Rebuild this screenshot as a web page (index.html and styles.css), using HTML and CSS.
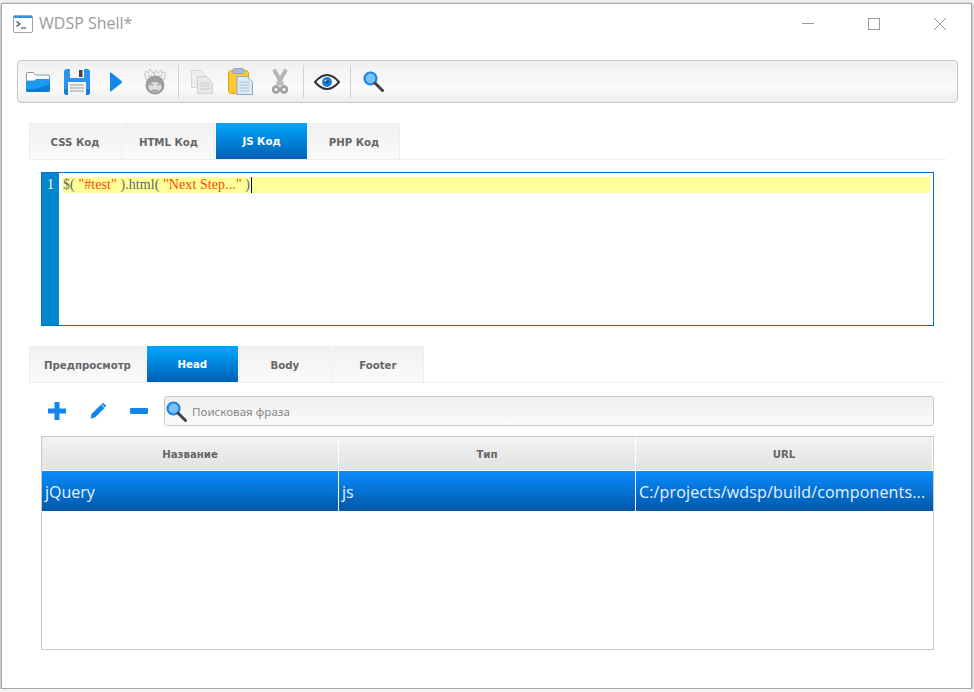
FILE: index.html
```html
<!DOCTYPE html>
<html lang="en">
<head>
    <meta charset="UTF-8">
    <meta name="viewport" content="width=device-width, initial-scale=1.0">
    <title>WDSP Shell</title>
    <link rel="stylesheet" href="styles.css">
</head>
<body>
    <div class="window">
        <!-- Title bar -->
        <div class="titlebar">
            <svg class="app-icon" width="20" height="18" viewBox="0 0 20 18">
                <rect x="0.5" y="0.5" width="19" height="17" rx="1.5" fill="#fff" stroke="#9aa5b0"/>
                <rect x="1" y="1" width="18" height="2" fill="#3a8fd6"/>
                <path d="M3.5 6.5l3.5 2.5-3.500 2.500" fill="none" stroke="#444" stroke-width="1.100"/>
                <path d="M8 13h5" stroke="#444" stroke-width="1.100"/>
            </svg>
            <span class="app-title">WDSP Shell*</span>
            <div class="win-controls">
                <button class="win-btn">
                    <svg width="12" height="12" viewBox="0 0 12 12"><path d="M0 5.5h12" stroke="#999"/></svg>
                </button>
                <button class="win-btn">
                    <svg width="12" height="12" viewBox="0 0 12 12"><rect x="0.5" y="0.5" width="11" height="11" fill="none" stroke="#999"/></svg>
                </button>
                <button class="win-btn">
                    <svg width="12" height="12" viewBox="0 0 12 12"><path d="M0 0l12 12M12 0L0 12" stroke="#999"/></svg>
                </button>
            </div>
        </div>

        <!-- Main toolbar -->
        <div class="toolbar">
            <button class="tool-btn">
                <svg width="24" height="20" viewBox="0 0 24 20">
                    <path d="M0.5 6V1.500q0-1 1-1h6l2 2.500h13q1 0 1 1V9H0.500z" fill="#fdfdfd" stroke="#8b96a0"/>
                    <path d="M0 9h8l2-2h14v11q0 2-2 2H2q-2 0-2-2z" fill="#1a9af0"/>
                    <path d="M0 17q12 1 24-5v6q0 2-2 2H2q-2 0-2-2z" fill="#0a7cd6"/>
                </svg>
            </button>
            <button class="tool-btn">
                <svg width="26" height="26" viewBox="0 0 26 26">
                    <rect width="26" height="26" rx="3" fill="#2b94f2"/>
                    <path d="M0 20h26v3q0 3-3 3H3q-3 0-3-3z" fill="#1a7ed8"/>
                    <rect x="6" y="0" width="14" height="9" fill="#f6f6f6"/>
                    <rect x="15" y="1" width="3.500" height="7" fill="#444"/>
                    <rect x="4" y="13" width="18" height="13" fill="#f4f4f4"/>
                    <path d="M6 16h14M6 19h14M6 22h14" stroke="#999"/>
                </svg>
            </button>
            <button class="tool-btn">
                <svg width="12" height="20" viewBox="0 0 12 20">
                    <path d="M1 0.500L11.500 9q1 1 0 2L1 19.500q-1 .5-1-1V1.500q0-1.500 1-1z" fill="#1486ea"/>
                </svg>
            </button>
            <button class="tool-btn">
                <svg class="muted-icon" width="24" height="26" viewBox="0 0 24 26">
                    <path d="M3 11Q0 6 3 2l2 2 2-4 3 4 3-3 2 3 3-3 1 3 3-1q2 4-1 8z" fill="#ececec" stroke="#c4c4c4"/>
                    <path d="M5 6q2 2 4 1M19 6q-2 2-4 1M11 3l1 4" stroke="#bbb" fill="none"/>
                    <circle cx="12" cy="16" r="9.500" fill="#8f8f8f"/>
                    <ellipse cx="12" cy="18" rx="6.500" ry="5" fill="#d8d8d8"/>
                    <path d="M7 15l3 1M17 15l-3 1M9 21q3 1.500 6 0" stroke="#808080" stroke-width="1.300" fill="none"/>
                </svg>
            </button>
            <span class="tool-sep"></span>
            <button class="tool-btn">
                <svg width="22" height="24" viewBox="0 0 22 24">
                    <path d="M0.500 0.500h9l4 4v13h-13z" fill="#eee" stroke="#d8d8d8"/>
                    <path d="M6.500 6.500h9l6 6v11h-15z" fill="#e8e8e8" stroke="#d0d0d0"/>
                    <path d="M9 13h10M9 16h10M9 19h10" stroke="#c8c8c8"/>
                </svg>
            </button>
            <button class="tool-btn">
                <svg width="25" height="27" viewBox="0 0 25 27">
                    <rect x="0.500" y="2.500" width="20" height="23" rx="3" fill="#fcc934" stroke="#d79f1e"/>
                    <rect x="5" y="0.500" width="11" height="5" rx="1.500" fill="#a9bdd4" stroke="#8ea6c0"/>
                    <path d="M9 8.500h10l5.500 5.500v12.500H9z" fill="#dfe9f5" stroke="#8fa9c8"/>
                    <path d="M11.500 14h10M11.500 17h10M11.500 20h10M11.500 23h10" stroke="#a8c0dc"/>
                </svg>
            </button>
            <button class="tool-btn">
                <svg width="16" height="25" viewBox="0 0 16 25">
                    <path d="M2 0.500L10.500 16M14 0.500L5.500 16" stroke="#b6b6b6" stroke-width="4" fill="none"/>
                    <circle cx="4" cy="20.500" r="3" fill="none" stroke="#a4a4a4" stroke-width="2.800"/>
                    <circle cx="12" cy="20.500" r="3" fill="none" stroke="#a4a4a4" stroke-width="2.800"/>
                </svg>
            </button>
            <span class="tool-sep"></span>
            <button class="tool-btn">
                <svg width="26" height="16" viewBox="0 0 26 16">
                    <path d="M1 8q12-14 24 0q-12 14-24 0z" fill="#fff" stroke="#333" stroke-width="2"/>
                    <circle cx="13" cy="8" r="5" fill="#1a7fdc"/>
                    <circle cx="13" cy="8" r="2" fill="#0b4f96"/>
                    <circle cx="11.500" cy="6.500" r="1" fill="#cfe6fb"/>
                </svg>
            </button>
            <span class="tool-sep"></span>
            <button class="tool-btn">
                <svg width="21" height="21" viewBox="0 0 21 21">
                    <circle cx="7.500" cy="7.500" r="6" fill="#7cc0f7" stroke="#1a86e6" stroke-width="2.200"/>
                    <path d="M12 12l7.500 7.500" stroke="#444" stroke-width="3" stroke-linecap="round"/>
                </svg>
            </button>
        </div>

        <!-- Code tabs -->
        <div class="tabs code-tabs">
            <div class="tab">CSS Код</div>
            <div class="tab html-tab">HTML Код</div>
            <div class="tab active">JS Код</div>
            <div class="tab">PHP Код</div>
        </div>

        <!-- Editor -->
        <div class="editor">
            <div class="gutter">1</div>
            <div class="code-area">
                <div class="code-line">$( <span class="str">"#test"</span> ).html( <span class="str">"Next Step..."</span> )<span class="caret"></span></div>
            </div>
        </div>

        <!-- Resource tabs -->
        <div class="tabs res-tabs">
            <div class="tab">Предпросмотр</div>
            <div class="tab active">Head</div>
            <div class="tab">Body</div>
            <div class="tab">Footer</div>
        </div>

        <!-- Search row -->
        <div class="search-row">
            <button class="row-btn">
                <svg width="18" height="18" viewBox="0 0 18 18"><path d="M6.500 0h5v6.500H18v5h-6.500V18h-5v-6.500H0v-5h6.500z" fill="#1486ea"/></svg>
            </button>
            <button class="row-btn">
                <svg width="16" height="16" viewBox="0 0 16 16"><path d="M0.500 15.500l1-4.500L11 1.500l3.500 3.500L5 14.500zM12 .5q1-1 2 0l1.500 1.500q1 1 0 2l-.5.500L11.500 1z" fill="#1486ea"/></svg>
            </button>
            <button class="row-btn">
                <svg width="18" height="6" viewBox="0 0 18 6"><rect width="18" height="6" rx="1" fill="#1486ea"/></svg>
            </button>
            <div class="search-box">
                <svg width="21" height="21" viewBox="0 0 21 21">
                    <circle cx="7.500" cy="7.500" r="6" fill="#7cc0f7" stroke="#1a86e6" stroke-width="2.200"/>
                    <path d="M12 12l7.500 7.500" stroke="#444" stroke-width="3" stroke-linecap="round"/>
                </svg>
                <span class="search-text">Поисковая фраза</span>
            </div>
        </div>

        <!-- Table -->
        <div class="grid-table">
            <div class="grid-row grid-head">
                <div class="cell">Название</div>
                <div class="cell">Тип</div>
                <div class="cell">URL</div>
            </div>
            <div class="grid-row grid-selected">
                <div class="cell">jQuery</div>
                <div class="cell">js</div>
                <div class="cell url-cell">C:/projects/wdsp/build/components...</div>
            </div>
        </div>
    </div>
</body>
</html>
```

FILE: styles.css
```css
body {
    margin: 0;
    padding: 3px 0 0 1px;
    background-color: #f4f4f4;
    font-family: "Open Sans", sans-serif;
    overflow: hidden;
}

button {
    background: none;
    border: none;
    padding: 0;
    cursor: pointer;
}

svg {
    display: block;
}

.window {
    width: 971px;
    height: 686px;
    box-sizing: border-box;
    background: white;
    border: 1px solid #a6a6a6;
    box-shadow: 0 1px 4px rgba(0, 0, 0, 0.35);
}

.titlebar {
    display: flex;
    align-items: flex-start;
    height: 56px;
    padding-left: 11px;
}

.app-icon {
    margin-top: 11px;
}

.app-title {
    margin: 7px 0 0 6px;
    font-size: 16px;
    line-height: 24px;
    color: #9a9a9a;
}

.win-controls {
    display: flex;
    margin-left: auto;
    margin-right: -2px;
}

.win-btn {
    width: 66px;
    height: 40px;
    display: flex;
    align-items: center;
    justify-content: center;
}

.toolbar {
    display: flex;
    align-items: center;
    height: 43px;
    box-sizing: border-box;
    margin: 0 13px 20px 15px;
    border: 1px solid #c6c6c6;
    border-radius: 4px;
    background: linear-gradient(#efefef, #fbfbfb 65%, #ececec);
}

.tool-btn {
    width: 39px;
    height: 33px;
    display: flex;
    align-items: center;
    justify-content: center;
}

.muted-icon {
    opacity: 0.85;
}

.tool-sep {
    width: 1px;
    height: 33px;
    margin: 0 3px 0 4px;
    background: #d2d2d2;
}

.tabs {
    display: flex;
    height: 37px;
    box-sizing: border-box;
    margin: 0 25px 0 27px;
    border-bottom: 1px solid #eeeeee;
}

.tab {
    min-width: 92px;
    height: 36px;
    box-sizing: border-box;
    margin-right: 1px;
    padding: 1px 14px 0;
    display: flex;
    align-items: center;
    justify-content: center;
    border: 1px solid #eeeeee;
    border-bottom: none;
    background: linear-gradient(#f1f1f1, #fafafa);
    font-family: "DejaVu Sans", sans-serif;
    font-size: 10.2px;
    font-weight: 700;
    color: #666;
}

.tab.active {
    min-width: 91px;
    border: none;
    background: linear-gradient(#00a6ff, #0060b4);
    color: white;
}

.code-tabs .html-tab {
    min-width: 93px;
}

.res-tabs .tab {
    flex-shrink: 0;
}

.editor {
    display: flex;
    width: 893px;
    height: 154px;
    box-sizing: border-box;
    margin: 12px 0 20px 39px;
    border: 1px solid #0a6fc2;
}

.gutter {
    width: 17px;
    padding-top: 4px;
    background: #0087cc;
    color: white;
    font-family: "Liberation Serif", serif;
    font-size: 14px;
    line-height: 16px;
    text-align: center;
}

.code-area {
    flex: 1;
    padding: 4px 3px 0 4px;
}

.code-line {
    height: 16px;
    background: #ffff99;
    color: #666;
    font-family: "Liberation Serif", serif;
    font-size: 14px;
    line-height: 16px;
    letter-spacing: 0.08px;
    white-space: nowrap;
}

.str {
    color: #ff4500;
}

.caret {
    display: inline-block;
    width: 1px;
    height: 16px;
    margin-left: 1px;
    background: #000080;
    vertical-align: top;
}

.search-row {
    display: flex;
    align-items: center;
    height: 30px;
    margin: 13px 37px 10px 34px;
}

.row-btn {
    width: 41px;
    height: 30px;
    display: flex;
    align-items: center;
    justify-content: center;
}

.search-box {
    flex: 1;
    height: 30px;
    box-sizing: border-box;
    margin-left: 5px;
    padding-left: 1px;
    display: flex;
    align-items: center;
    gap: 5px;
    border: 1px solid #c8c8c8;
    border-radius: 3px;
    background: linear-gradient(#efefef, #fafafa);
}

.search-text {
    font-family: "Noto Sans", sans-serif;
    font-size: 11.6px;
    color: #888;
}

.grid-table {
    width: 893px;
    height: 214px;
    box-sizing: border-box;
    margin-left: 39px;
    border: 1px solid #c8c8c8;
}

.grid-row {
    display: grid;
    grid-template-columns: 297px 297px 297px;
}

.grid-head {
    height: 33px;
    border-bottom: 1px solid white;
}

.grid-head .cell {
    display: flex;
    align-items: center;
    justify-content: center;
    padding-top: 1px;
    border-right: 1px solid white;
    background: linear-gradient(#f2f2f2, #e2e2e2);
    font-family: "DejaVu Sans", sans-serif;
    font-size: 10.2px;
    font-weight: 700;
    color: #666;
}

.grid-selected {
    height: 40px;
}

.grid-selected .cell {
    padding-left: 3px;
    border-right: 1px solid white;
    background: linear-gradient(#0a8cff, #0058a8);
    color: #e6f3ff;
    font-size: 16px;
    line-height: 42px;
    white-space: nowrap;
    overflow: hidden;
}

.grid-selected .url-cell {
    border-right: none;
    letter-spacing: 0.15px;
}
```
